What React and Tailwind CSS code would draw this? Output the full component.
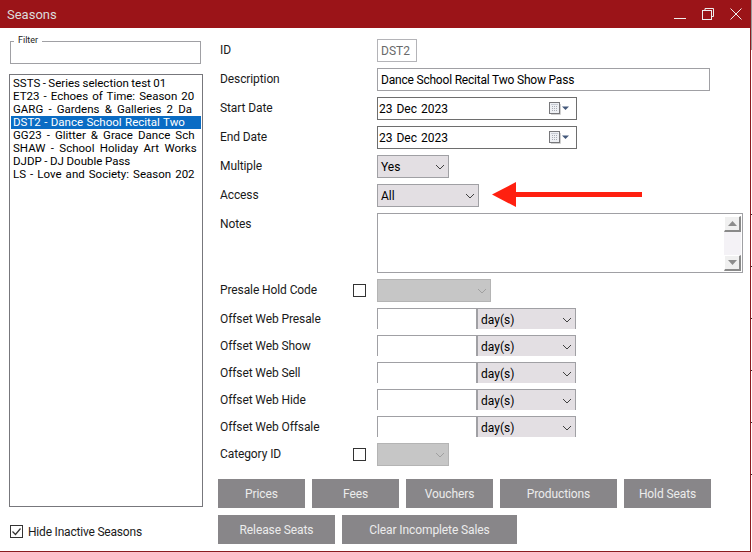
import React from "react";

const seasons = [
  ["SSTS - Series selection test 01", "[word-spacing:-0.4px]"],
  ["ET23 - Echoes of Time: Season 20", "[word-spacing:1.2px]"],
  ["GARG - Gardens & Galleries 2 Da", "[word-spacing:2.3px]"],
  ["DST2 - Dance School Recital Two", "[word-spacing:0.6px]"],
  ["GG23 - Glitter & Grace Dance Sch", "[word-spacing:2.2px]"],
  ["SHAW - School Holiday Art Works", "[word-spacing:2.5px]"],
  ["DJDP - DJ Double Pass", "[word-spacing:-0.25px]"],
  ["LS - Love and Society: Season 202", "[word-spacing:1.2px]"],
];

const Chevron = ({ color = "#404040" }) => (
  <svg width="10" height="6" viewBox="0 0 10 6" className="shrink-0">
    <path d="M1 1l4 4 4-4" fill="none" stroke={color} strokeWidth="1" />
  </svg>
);

const Label = ({ children }) => (
  <span className="block text-[12px] leading-[14px] tracking-[-0.1px] text-[#1a1a1a]">{children}</span>
);

const Row = ({ label, children }) => (
  <div className="flex items-center h-[23px]">
    <div className="w-[159px] pl-[2px] pb-[2px] shrink-0"><Label>{label}</Label></div>
    {children}
  </div>
);

const Select = ({ value, w, disabled }) => (
  <div className={`${w} h-[23px] border flex items-center justify-between pl-[3px] pr-[3px] text-[12px] ${disabled ? "bg-[#c6c6c6] border-[#b4b4b4]" : "bg-[#e3dfe3] border-[#a0a0a4] text-black"}`}>
    <span>{value}</span>
    <Chevron color={disabled ? "#a0a0a0" : "#404040"} />
  </div>
);

const CalendarIcon = () => (
  <svg width="21" height="13" viewBox="0 0 21 13" className="shrink-0">
    <path d="M11.500 2v10.500H2" fill="none" stroke="#d0d0d0" />
    <rect x="0.5" y="0.5" width="10" height="11" fill="#eef0f4" stroke="#77777a" />
    <rect x="2" y="2" width="7" height="1" fill="#c8ccd4" />
    <path d="M3 4.500h1M5 4.500h1M7 4.500h1M3 6.500h1M5 6.500h1M7 6.500h1M3 8.500h1M5 8.500h1M7 8.500h1" stroke="#a8acb4" />
    <path d="M13 4.500h7l-3.500 3.500z" fill="#44587a" />
  </svg>
);

const DateField = ({ value }) => (
  <div className="w-[200px] h-[23px] border border-[#6e6e6e] flex items-center justify-between pl-[1px] pr-[6px] text-[12px] text-black">
    <span className="[word-spacing:1px]">{value}</span>
    <CalendarIcon />
  </div>
);

const OffsetRow = ({ label }) => (
  <div className="flex items-center h-[21px]">
    <div className="w-[159px] pl-[2px] shrink-0"><Label>{label}</Label></div>
    <div className="w-[99px] h-full border-t border-l border-[#a0a0a4] bg-white" />
    <div className="w-[100px] h-full border-t border-l-2 border-r border-[#a0a0a4] bg-[#e3dfe3] flex items-center justify-between pt-[1px] pl-[3px] pr-[3px] text-[12px] text-black">
      <span>day(s)</span>
      <Chevron />
    </div>
  </div>
);

const Btn = ({ w, children }) => (
  <div className={`${w} h-[29px] bg-[#888689] text-[#ececec] text-[12px] tracking-[-0.1px] flex items-center justify-center`}>{children}</div>
);

const Check = ({ checked }) => (
  <div className="w-[13px] h-[13px] border border-[#333] bg-white flex items-center justify-center shrink-0">
    {checked && (
      <svg width="11" height="11" viewBox="0 0 11 11">
        <path d="M1.500 5.500l3 3 5-6" fill="none" stroke="#333" strokeWidth="1.200" />
      </svg>
    )}
  </div>
);

const ScrollBtn = ({ up }) => (
  <div className="h-[16px] bg-[#f0f0f0] border-t border-l border-t-white border-l-white border-r-2 border-b-2 border-r-[#8a8a8a] border-b-[#8a8a8a] flex items-center justify-center">
    <svg width="9" height="5" viewBox="0 0 9 5">
      <path d={up ? "M4.500 0L9 5H0z" : "M0 0h9L4.500 5z"} fill="#8c8c8c" />
    </svg>
  </div>
);

const ticks = [
  "top-[214px]",
  "top-[266px]",
  "top-[318px]",
  "top-[370px]",
  "top-[422px]",
  "top-[474px]",
];

export default function App() {
  return (
    <div className="w-[752px] h-[552px] bg-white overflow-hidden font-['Roboto',sans-serif] flex flex-col relative">
      <div className="w-[751px] h-[552px] border-r border-b border-[#8a1a1e] flex flex-col">
        <header className="h-[28px] shrink-0 bg-[#9b1418] flex items-center justify-between pl-[7px] pr-[8px] text-[#dcdcdc] text-[13px]">
          <span className="mt-[2px]">Seasons</span>
          <div className="flex items-center gap-[16px]">
            <svg width="12" height="12" viewBox="0 0 12 12"><path d="M0 10.500h12" stroke="#eee" /></svg>
            <svg width="12" height="12" viewBox="0 0 12 12" fill="none" stroke="#eee"><path d="M3 2.500V.5h8.500v8H9" /><rect x="0.500" y="2.500" width="9" height="9" /></svg>
            <svg width="12" height="12" viewBox="0 0 12 12"><path d="M.5.500l11 11M11.500.500l-11 11" stroke="#eee" /></svg>
          </div>
        </header>
        <div className="flex-1 flex min-h-0">
          <aside className="w-[218px] shrink-0 flex flex-col pl-[9px] pt-[13px]">
            <div className="relative ml-[1px] w-[191px] h-[23px] border border-[#a0a0a4]">
              <span className="absolute left-[3px] -top-[8px] bg-white px-[4px] text-[9px] leading-[12px] text-[#222]">Filter</span>
            </div>
            <div className="mt-[10px] w-[194px] h-[433px] border border-[#77777c] pt-[2px] pl-[1px] pr-[1px] overflow-hidden">
              {seasons.map(([s, spacing], i) => (
                <div key={s} className={`h-[13px] pl-[2px] text-[11.5px] leading-[13px] whitespace-nowrap ${spacing} ${i === 3 ? "bg-[#0a6cc4] text-white" : "text-black"}`}>
                  {s}
                </div>
              ))}
            </div>
            <div className="mt-[18px] flex items-center gap-[5px] ml-[1px]">
              <Check checked />
              <span className="text-[12px] leading-none tracking-[-0.2px] text-[#1a1a1a]">Hide Inactive Seasons</span>
            </div>
          </aside>
          <main className="flex-1 flex flex-col pt-[11px]">
            <div className="flex flex-col gap-[6px]">
              <Row label="ID">
                <div className="w-[40px] h-[23px] border border-[#b4b4b8] flex items-center pl-[3px] text-[12px] text-[#6a6a6a]">DST2</div>
              </Row>
              <Row label="Description">
                <div className="w-[333px] h-[23px] border border-[#a0a0a4] flex items-center pl-[3px] text-[12px] tracking-[-0.2px] text-black">Dance School Recital Two Show Pass</div>
              </Row>
              <Row label="Start Date"><DateField value="23 Dec 2023" /></Row>
              <Row label="End Date"><DateField value="23 Dec 2023" /></Row>
              <Row label="Multiple"><Select value="Yes" w="w-[72px]" /></Row>
              <Row label="Access"><Select value="All" w="w-[102px]" /></Row>
              <div className="flex h-[60px]">
                <div className="w-[159px] pl-[2px] pt-[4px] shrink-0"><Label>Notes</Label></div>
                <div className="w-[366px] h-full border border-[#a0a0a4] pt-[2px] pr-[1px] flex justify-end">
                  <div className="w-[17px] h-[55px] flex flex-col justify-between bg-[#f4f2f6]">
                    <ScrollBtn up />
                    <ScrollBtn />
                  </div>
                </div>
              </div>
              <div className="flex items-center h-[23px]">
                <div className="w-[135px] pl-[2px] pb-[2px] shrink-0"><Label>Presale Hold Code</Label></div>
                <div className="w-[24px] shrink-0"><Check /></div>
                <Select value="" w="w-[114px]" disabled />
              </div>
            </div>
            <div className="mt-[6px] flex flex-col gap-[6px]">
              <OffsetRow label="Offset Web Presale" />
              <OffsetRow label="Offset Web Show" />
              <OffsetRow label="Offset Web Sell" />
              <OffsetRow label="Offset Web Hide" />
              <OffsetRow label="Offset Web Offsale" />
            </div>
            <div className="mt-[6px] flex items-center h-[23px]">
              <div className="w-[135px] pl-[2px] pb-[2px] shrink-0"><Label>Category ID</Label></div>
              <div className="w-[24px] shrink-0"><Check /></div>
              <Select value="" w="w-[72px]" disabled />
            </div>
            <div className="mt-[13px] flex gap-[7px]">
              <Btn w="w-[87px]">Prices</Btn>
              <Btn w="w-[87px]">Fees</Btn>
              <Btn w="w-[87px]">Vouchers</Btn>
              <Btn w="w-[117px]">Productions</Btn>
              <Btn w="w-[87px]">Hold Seats</Btn>
            </div>
            <div className="mt-[7px] flex gap-[7px]">
              <Btn w="w-[117px]">Release Seats</Btn>
              <Btn w="w-[175px]">Clear Incomplete Sales</Btn>
            </div>
          </main>
        </div>
      </div>
      <div className="absolute left-[751px] top-0 w-[1px] h-[50px] bg-[#9a9a9a]" />
      {ticks.map((t) => (
        <div key={t} className={`absolute left-[751px] w-[1px] h-[1px] bg-[#333] ${t}`} />
      ))}
      <svg className="absolute left-[492px] top-[181px]" width="151" height="26" viewBox="0 0 151 26">
        <path d="M0 13.500L24 1v10h126v5H24v10z" fill="#ff2010" />
      </svg>
    </div>
  );
}
